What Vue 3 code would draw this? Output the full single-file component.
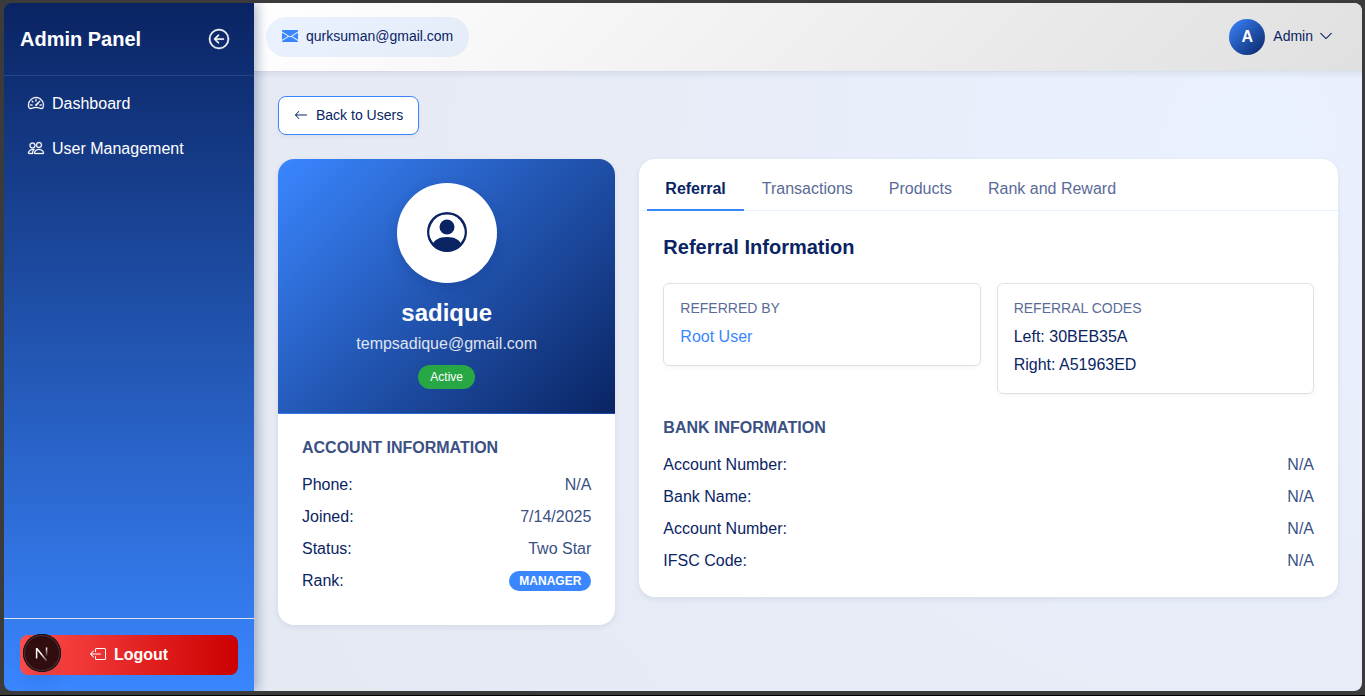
<script setup>
import { ref } from 'vue'

const icons = {
  collapse: ['M1 8a7 7 0 1 0 14 0A7 7 0 0 0 1 8m15 0A8 8 0 1 1 0 8a8 8 0 0 1 16 0m-4.5-.5a.5.5 0 0 1 0 1H5.707l2.147 2.146a.5.5 0 0 1-.708.708l-3-3a.5.5 0 0 1 0-.708l3-3a.5.5 0 1 1 .708.708L5.707 7.5z'],
  dashboard: [
    'M8 4a.5.5 0 0 1 .5.5V6a.5.5 0 0 1-1 0V4.5A.5.5 0 0 1 8 4M3.732 5.732a.5.5 0 0 1 .707 0l.915.914a.5.5 0 1 1-.708.708l-.914-.915a.5.5 0 0 1 0-.707M2 10a.5.5 0 0 1 .5-.5h1.586a.5.5 0 0 1 0 1H2.5A.5.5 0 0 1 2 10m9.5 0a.5.5 0 0 1 .5-.5h1.5a.5.5 0 0 1 0 1H12a.5.5 0 0 1-.5-.5m.754-4.246a.39.39 0 0 0-.527-.02L7.547 9.31a.91.91 0 1 0 1.302 1.258l3.434-4.297a.39.39 0 0 0-.029-.518z',
    'M0 10a8 8 0 1 1 15.547 2.661c-.442 1.253-1.845 1.602-2.932 1.25C11.309 13.488 9.475 13 8 13c-1.474 0-3.31.488-4.615.911-1.087.352-2.49.003-2.932-1.25A8 8 0 0 1 0 10m8-7a7 7 0 0 0-6.603 9.329c.203.575.923.876 1.68.63C4.397 12.533 6.358 12 8 12s3.604.532 4.923.96c.757.245 1.477-.056 1.68-.631A7 7 0 0 0 8 3',
  ],
  people: ['M15 14s1 0 1-1-1-4-5-4-5 3-5 4 1 1 1 1zm-7.978-1L7 12.996c.001-.264.167-1.03.76-1.72C8.312 10.629 9.282 10 11 10c1.717 0 2.687.63 3.24 1.276.593.69.758 1.457.76 1.72l-.008.002-.014.002zM11 7a2 2 0 1 0 0-4 2 2 0 0 0 0 4m3-2a3 3 0 1 1-6 0 3 3 0 0 1 6 0M6.936 9.28a6 6 0 0 0-1.23-.247A7 7 0 0 0 5 9c-4 0-5 3-5 4q0 1 1 1h4.216A2.24 2.24 0 0 1 5 13c0-1.01.377-2.042 1.09-2.904.243-.294.526-.569.846-.816M4.92 10A5.5 5.5 0 0 0 4 13H1c0-.26.164-1.03.76-1.724.545-.636 1.492-1.256 3.16-1.275ZM1.5 5.5a3 3 0 1 1 6 0 3 3 0 0 1-6 0m3-2a2 2 0 1 0 0 4 2 2 0 0 0 0-4'],
}

const navItems = [
  { label: 'Dashboard', icon: icons.dashboard },
  { label: 'User Management', icon: icons.people },
]

const account = [
  { label: 'Phone:', value: 'N/A' },
  { label: 'Joined:', value: '7/14/2025' },
  { label: 'Status:', value: 'Two Star' },
  { label: 'Rank:', value: 'MANAGER', badge: true },
]

const bank = [
  { label: 'Account Number:', value: 'N/A' },
  { label: 'Bank Name:', value: 'N/A' },
  { label: 'Account Number:', value: 'N/A' },
  { label: 'IFSC Code:', value: 'N/A' },
]

const tabs = ['Referral', 'Transactions', 'Products', 'Rank and Reward']
const activeTab = ref('Referral')
</script>

<template>
  <div class="window">
    <div class="shell">
      <aside class="sidebar">
        <div class="brand">
          <h1>Admin Panel</h1>
          <button class="collapse" type="button" aria-label="Collapse sidebar">
            <svg viewBox="0 0 16 16" class="icon-lg"><path v-for="d in icons.collapse" :key="d" :d="d" /></svg>
          </button>
        </div>
        <nav class="menu">
          <a v-for="item in navItems" :key="item.label" href="#">
            <svg viewBox="0 0 16 16" class="icon"><path v-for="d in item.icon" :key="d" :d="d" /></svg>
            <span>{{ item.label }}</span>
          </a>
        </nav>
        <div class="side-foot">
          <button class="logout" type="button">
            <svg viewBox="0 0 16 16" class="icon">
              <path d="M6 12.5a.5.5 0 0 0 .5.5h8a.5.5 0 0 0 .5-.5v-9a.5.5 0 0 0-.5-.5h-8a.5.5 0 0 0-.5.5v2a.5.5 0 0 1-1 0v-2A1.5 1.5 0 0 1 6.5 2h8A1.5 1.5 0 0 1 16 3.5v9a1.5 1.5 0 0 1-1.5 1.5h-8A1.5 1.5 0 0 1 5 12.5v-2a.5.5 0 0 1 1 0z" />
              <path d="M.146 8.354a.5.5 0 0 1 0-.708l3-3a.5.5 0 1 1 .708.708L1.707 7.5H10.5a.5.5 0 0 1 0 1H1.707l2.147 2.146a.5.5 0 0 1-.708.708z" />
            </svg>
            <span>Logout</span>
          </button>
          <button class="devtools" type="button" aria-label="Open developer tools">
            <svg viewBox="0 0 38 38">
              <defs>
                <linearGradient id="fadeDiagonal" gradientUnits="userSpaceOnUse" x1="19" y1="19" x2="24" y2="26">
                  <stop offset="0" stop-color="#fff" />
                  <stop offset="1" stop-color="#fff" stop-opacity="0.3" />
                </linearGradient>
                <linearGradient id="fadeStem" x1="0" y1="0" x2="0" y2="1">
                  <stop offset="0" stop-color="#fff" />
                  <stop offset="1" stop-color="#fff" stop-opacity="0.1" />
                </linearGradient>
              </defs>
              <path class="letter" d="M13.600 24.500V14.200L23.600 26.800" stroke="url(#fadeDiagonal)" />
              <rect x="22.800" y="13.500" width="1.500" height="8.500" fill="url(#fadeStem)" />
            </svg>
          </button>
        </div>
      </aside>

      <div class="page">
        <header class="topbar">
          <div class="mail">
            <svg viewBox="0 0 16 16" class="icon">
              <path d="M0 2h16v1.600L8 8.400 0 3.600zM0 4.700v7.100l5.800-3.560zM6.760 8.830 0 12.970V14h16v-1.030L9.240 8.830 8 9.590zm3.440-.590L16 11.800V4.700z" />
            </svg>
            <span>qurksuman@gmail.com</span>
          </div>
          <button class="profile" type="button">
            <span class="initial">A</span>
            <span class="who">
              <span>Admin</span>
              <svg viewBox="0 0 16 16" class="icon-sm">
                <path d="M1.646 4.646a.5.5 0 0 1 .708 0L8 10.293l5.646-5.647a.5.5 0 0 1 .708.708l-6 6a.5.5 0 0 1-.708 0l-6-6a.5.5 0 0 1 0-.708" />
              </svg>
            </span>
          </button>
        </header>

        <main class="content">
          <button class="back" type="button">
            <svg viewBox="0 0 16 16" class="icon-sm">
              <path d="M15 8a.5.5 0 0 0-.5-.5H2.707l3.147-3.146a.5.5 0 1 0-.708-.708l-4 4a.5.5 0 0 0 0 .708l4 4a.5.5 0 0 0 .708-.708L2.707 8.500H14.500A.5.5 0 0 0 15 8" />
            </svg>
            <span>Back to Users</span>
          </button>

          <div class="columns">
            <section class="card user-card">
              <div class="hero">
                <div class="avatar">
                  <svg viewBox="0 0 16 16">
                    <path d="M11 6a3 3 0 1 1-6 0 3 3 0 0 1 6 0" />
                    <path fill-rule="evenodd" d="M0 8a8 8 0 1 1 16 0A8 8 0 0 1 0 8m8-7a7 7 0 0 0-5.468 11.370C3.242 11.226 4.805 10 8 10s4.757 1.225 5.468 2.370A7 7 0 0 0 8 1" />
                  </svg>
                </div>
                <h2>sadique</h2>
                <p>tempsadique@gmail.com</p>
                <span class="active-badge">Active</span>
              </div>
              <div class="account">
                <h3>ACCOUNT INFORMATION</h3>
                <dl class="rows">
                  <div v-for="row in account" :key="row.label">
                    <dt>{{ row.label }}</dt>
                    <dd><span :class="{ 'rank-badge': row.badge }">{{ row.value }}</span></dd>
                  </div>
                </dl>
              </div>
            </section>

            <section class="card detail-card">
              <div class="tabs" role="tablist">
                <button
                  v-for="tab in tabs"
                  :key="tab"
                  type="button"
                  role="tab"
                  :aria-selected="tab === activeTab"
                  :class="{ selected: tab === activeTab }"
                  @click="activeTab = tab"
                >{{ tab }}</button>
              </div>
              <div class="detail">
                <h2>Referral Information</h2>
                <div class="boxes">
                  <div class="box">
                    <h4>REFERRED BY</h4>
                    <a href="#">Root User</a>
                  </div>
                  <div class="box">
                    <h4>REFERRAL CODES</h4>
                    <p>Left: 30BEB35A</p>
                    <p>Right: A51963ED</p>
                  </div>
                </div>
                <h3>BANK INFORMATION</h3>
                <dl class="rows">
                  <div v-for="(row, i) in bank" :key="i">
                    <dt>{{ row.label }}</dt>
                    <dd>{{ row.value }}</dd>
                  </div>
                </dl>
              </div>
            </section>
          </div>
        </main>
      </div>
    </div>
  </div>
</template>

<style>
body {
  margin: 0;
  background: #3b3b3b;
}
</style>

<style scoped>
* {
  box-sizing: border-box;
}

.window {
  display: flex;
  min-height: 100vh;
  padding: 3px 3px 4px 4px;
  border-bottom: 1px solid #000;
  background: #3b3b3b;
  color: #0a2463;
  font: 16px/24px "Liberation Sans", Arial, sans-serif;
}

h1, h2, h3, h4, p, dl, dd {
  margin: 0;
}

button {
  font: inherit;
  color: inherit;
  border: 0;
  background: none;
  cursor: pointer;
}

a {
  text-decoration: none;
}

svg {
  display: block;
  flex: none;
  fill: currentColor;
}

.icon {
  width: 16px;
  height: 16px;
  margin-bottom: 2px;
}

.icon-sm {
  width: 14px;
  height: 14px;
  margin-bottom: 2px;
}

.icon-lg {
  width: 20px;
  height: 20px;
  stroke: currentColor;
  stroke-width: 0.4;
  overflow: visible;
}

.shell {
  display: flex;
  flex: 1;
  border-radius: 8px;
  overflow: hidden;
}

.sidebar {
  position: relative;
  z-index: 2;
  display: flex;
  flex: none;
  flex-direction: column;
  width: 250px;
  color: #fff;
  background: linear-gradient(180deg, #0a2463, #3a86ff);
  box-shadow: 4px 0 10px rgba(10, 36, 99, 0.3);
}

.brand {
  display: flex;
  align-items: center;
  justify-content: space-between;
  height: 73px;
  padding: 0 16px;
  border-bottom: 1px solid rgba(255, 255, 255, 0.1);
}

.brand h1 {
  font-size: 20px;
  line-height: 24px;
}

.collapse {
  padding: 8px 9px;
}

.menu {
  display: flex;
  flex: 1;
  flex-direction: column;
  gap: 5px;
  padding: 8px;
}

.menu a {
  display: flex;
  align-items: center;
  gap: 8px;
  padding: 8px 16px;
  color: #fff;
}

.menu svg {
  stroke: currentColor;
  stroke-width: 0.3;
  overflow: visible;
}

.side-foot {
  position: relative;
  padding: 16px;
  border-top: 1px solid #dee2e6;
}

.logout {
  display: flex;
  align-items: center;
  justify-content: center;
  gap: 8px;
  width: 100%;
  height: 40px;
  border-radius: 8px;
  color: #fff;
  font-weight: 700;
  background: linear-gradient(90deg, #ff4d4d, #cc0000);
}

.devtools {
  position: absolute;
  left: 19px;
  bottom: 19px;
  width: 38px;
  height: 38px;
  padding: 0;
  border-radius: 50%;
  background: #310d0f;
  box-shadow: inset 0 0 0 1px #151012, inset 0 0 0 2px #4f3032, 0 12px 20px -6px rgba(0, 0, 0, 0.16);
}

.letter {
  fill: none;
  stroke-width: 1.5;
  stroke-linejoin: bevel;
}

.page {
  display: flex;
  flex: 1;
  flex-direction: column;
  min-width: 0;
  background: radial-gradient(circle at 90% 20%, #eaf1ff, #e7ecf7 50%, #e5e9f2);
}

.topbar {
  display: flex;
  align-items: center;
  justify-content: space-between;
  height: 69px;
  padding: 0 29px 0 12px;
  border-bottom: 1px solid rgba(10, 36, 99, 0.08);
  background: linear-gradient(135deg, #fff, #e0e0e0) padding-box;
  box-shadow: 0 2px 6px rgba(10, 36, 99, 0.08);
  font-size: 14px;
}

.mail {
  display: flex;
  align-items: center;
  gap: 8px;
  height: 40px;
  padding: 0 16px 2px;
  border-radius: 20px;
  background: linear-gradient(135deg, #eaf2ff, #e4ecf8);
}

.mail svg {
  margin: 0;
  color: #3a86ff;
}

.profile {
  display: flex;
  align-items: center;
  gap: 8px;
  padding: 0;
}

.who {
  display: flex;
  align-items: center;
  gap: 6px;
  padding-bottom: 2px;
}

.who svg {
  margin: 0;
  stroke: currentColor;
  stroke-width: 0.2;
}

.initial {
  display: grid;
  place-items: center;
  width: 36px;
  height: 36px;
  border-radius: 50%;
  color: #fff;
  font-size: 16px;
  font-weight: 700;
  background: linear-gradient(135deg, #3a86ff, #0a2463);
}

.content {
  flex: 1;
  padding: 24px;
}

.back {
  display: flex;
  align-items: center;
  gap: 8px;
  margin-bottom: 24px;
  padding: 8px 15px;
  border: 1px solid #3a86ff;
  border-radius: 8px;
  background: #fff;
  font-size: 14px;
  line-height: 21px;
  box-shadow: 0 2px 4px rgba(10, 36, 99, 0.05);
}

.columns {
  display: grid;
  grid-template-columns: repeat(12, minmax(0, 1fr));
  column-gap: 24px;
  align-items: start;
}

.card {
  overflow: hidden;
  border-radius: 16px;
  background: #fff;
  box-shadow: 0 2px 6px rgba(10, 36, 99, 0.08);
}

.user-card {
  grid-column: span 4;
}

.detail-card {
  grid-column: span 8;
}

.hero {
  display: flex;
  flex-direction: column;
  align-items: center;
  padding: 24px;
  border-bottom: 1px solid rgba(10, 36, 99, 0.1);
  color: #fff;
  background: linear-gradient(135deg, #3a86ff, #0a2463);
}

.avatar {
  display: grid;
  place-items: center;
  width: 100px;
  height: 100px;
  margin-bottom: 16px;
  border-radius: 50%;
  color: #0a2463;
  background: #fff;
  box-shadow: 0 4px 12px rgba(10, 36, 99, 0.2);
}

.avatar svg {
  width: 40px;
  height: 40px;
  margin-bottom: 2px;
}

.hero h2 {
  margin-bottom: 5px;
  font-size: 24px;
  line-height: 28px;
}

.hero p {
  margin-bottom: 9px;
  opacity: 0.85;
}

.active-badge {
  padding: 0 12px;
  border-radius: 12px;
  background: #28a745;
  font-size: 12px;
}

.account {
  padding: 24px;
}

h3 {
  margin-bottom: 16px;
  color: #3b5083;
  font-size: 16px;
  line-height: 19px;
}

.rows {
  display: grid;
  gap: 8px;
}

.rows > div {
  display: flex;
  justify-content: space-between;
}

.rows dd {
  color: #3b5083;
}

.account .rows {
  padding-bottom: 8px;
}

.rank-badge {
  display: block;
  margin-top: 2px;
  padding: 0 10px;
  border-radius: 10px;
  color: #fff;
  background: #3a86ff;
  font-size: 12px;
  font-weight: 700;
  line-height: 20px;
}

.tabs {
  display: flex;
  padding: 8px 8px 0;
  border-bottom: 1px solid #e6f0ff;
}

.tabs button {
  margin-bottom: -1px;
  padding: 10px 18px 8px;
  border-bottom: 2px solid transparent;
  color: #5a6b97;
}

.tabs .selected {
  border-color: #3a86ff;
  color: #0a2463;
  font-weight: 700;
}

.detail {
  padding: 24px;
}

.detail h2 {
  margin-bottom: 24px;
  font-size: 20px;
  line-height: 24px;
}

.boxes {
  display: grid;
  grid-template-columns: 1fr 1fr;
  align-items: start;
  gap: 16px;
  margin-bottom: 24px;
}

.box {
  display: grid;
  gap: 4px;
  padding: 16px;
  border: 1px solid #dee2e6;
  border-radius: 6px;
  box-shadow: 0 2px 4px rgba(0, 0, 0, 0.04);
}

.box h4 {
  margin-bottom: 4px;
  color: #5a6b97;
  font-size: 14px;
  font-weight: 400;
  line-height: 17px;
}

.box a {
  color: #3a86ff;
}
</style>
